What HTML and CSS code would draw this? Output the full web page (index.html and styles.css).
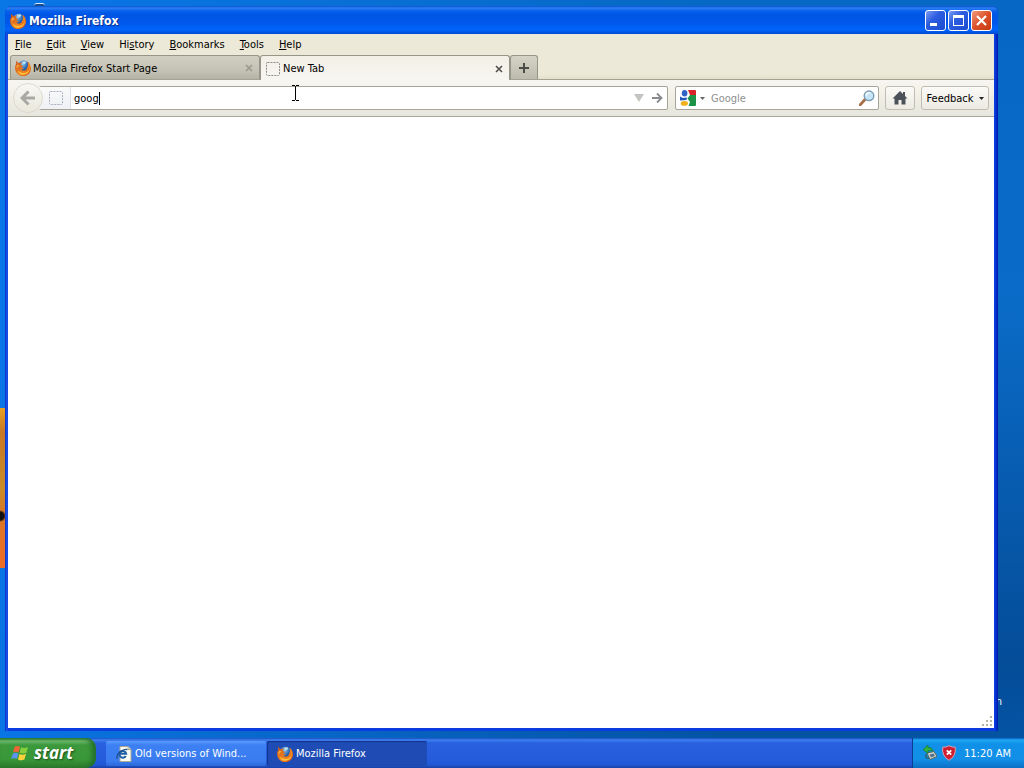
FILE: index.html
```html
<!DOCTYPE html>
<html lang="en">
<head>
    <meta charset="UTF-8">
    <meta name="viewport" content="width=device-width, initial-scale=1.0">
    <title>Mozilla Firefox</title>
    <link rel="stylesheet" href="styles.css">
</head>
<body>
    <!-- Shared icons -->
    <svg class="defs" aria-hidden="true">
        <defs>
            <radialGradient id="globe" cx="0.4" cy="0.3" r="0.8">
                <stop offset="0" stop-color="#8cc8ee"/>
                <stop offset="0.5" stop-color="#2f6fb8"/>
                <stop offset="1" stop-color="#122a68"/>
            </radialGradient>
            <linearGradient id="fox" x1="0" y1="0" x2="1" y2="1">
                <stop offset="0" stop-color="#c8501c"/>
                <stop offset="0.6" stop-color="#f08420"/>
                <stop offset="1" stop-color="#d8480c"/>
            </linearGradient>
            <symbol id="firefox" viewBox="0 0 16 16">
                <circle cx="8.6" cy="6.4" r="5.8" fill="url(#globe)"/>
                <path d="M7 2C8.5 0.8 10.6 1.2 11.4 2.2L10 4L8 4.6Z" fill="#b4dcf4"/>
                <path d="M1 0.6C0.8 2 1 2.8 1.4 3.6C0.4 5.2 -0.2 7.2 0.2 9.4C1 13.4 4.2 16 8.2 16C12.6 16 16 12.8 16 8.4C16 5.6 14.6 2.8 12.4 1.4C13.2 3.4 13.2 5.6 12.4 7.4C11.6 9.6 10.4 10.6 8.6 10.6C7.4 10.6 6.4 10 6 9.2C7.2 9.6 8.4 9.4 9.2 8.6C8.2 8.2 7 8.6 6.6 7.6C6.6 7 7.6 6.6 8.6 5.8C8 5.4 7 5.4 6.2 5.2C5.8 4.4 6.2 3.4 7 2.6C5.8 2.4 4.8 2.8 4 3.2C2.6 2.8 1.6 1.8 1 0.6Z" fill="url(#fox)"/>
                <path d="M15 5C15.4 9.4 13 12.8 8.8 13C5.4 13 3 11.6 2.2 9C2.8 12.8 5.4 14.8 8.4 14.8C12.6 14.8 15.6 11 15 5Z" fill="#fbc43c"/>
                <path d="M2.4 4.6C1.4 6 1.2 7.6 1.6 9C2.4 7.4 3.4 6.2 4.8 5.4Z" fill="#f9a83a"/>
            </symbol>
            <symbol id="blank-page" viewBox="0 0 14 14">
                <rect x="0.5" y="0.5" width="13" height="13" rx="1" fill="none" stroke="currentColor" stroke-dasharray="2 1"/>
            </symbol>
        </defs>
    </svg>

    <div class="desktop">
        <div class="wallpaper-art"></div>
        <div class="wallpaper-mark"></div>
        <span class="desktop-label">n</span>

        <div class="window">
            <header class="titlebar">
                <svg class="icon"><use href="#firefox"/></svg>
                <h1>Mozilla Firefox</h1>
                <div class="window-buttons">
                    <button type="button" aria-label="Minimize">
                        <svg viewBox="0 0 19 19"><rect x="4" y="12" width="7" height="3" fill="#fff"/></svg>
                    </button>
                    <button type="button" aria-label="Maximize">
                        <svg viewBox="0 0 19 19"><path d="M4 4h11v11H4ZM5 7v7h9V7Z" fill="#fff" fill-rule="evenodd"/></svg>
                    </button>
                    <button type="button" class="close" aria-label="Close">
                        <svg viewBox="0 0 19 19"><path d="M5 5L14 14M14 5L5 14" stroke="#fff" stroke-width="2.2"/></svg>
                    </button>
                </div>
            </header>

            <nav class="menubar">
                <button type="button"><u>F</u>ile</button>
                <button type="button"><u>E</u>dit</button>
                <button type="button"><u>V</u>iew</button>
                <button type="button">Hi<u>s</u>tory</button>
                <button type="button"><u>B</u>ookmarks</button>
                <button type="button"><u>T</u>ools</button>
                <button type="button"><u>H</u>elp</button>
            </nav>

            <div class="tabs">
                <div class="tab">
                    <svg class="icon"><use href="#firefox"/></svg>
                    <span>Mozilla Firefox Start Page</span>
                    <button type="button" class="tab-close" aria-label="Close tab">
                        <svg viewBox="0 0 8 8"><path d="M1 1L7 7M7 1L1 7" stroke="currentColor" stroke-width="1.6"/></svg>
                    </button>
                </div>
                <div class="tab active">
                    <svg class="page-icon"><use href="#blank-page"/></svg>
                    <span>New Tab</span>
                    <button type="button" class="tab-close" aria-label="Close tab">
                        <svg viewBox="0 0 8 8"><path d="M1 1L7 7M7 1L1 7" stroke="currentColor" stroke-width="1.6"/></svg>
                    </button>
                </div>
                <button type="button" class="new-tab" aria-label="Open a new tab">
                    <svg viewBox="0 0 10 10"><path d="M5 0V10M0 5H10" stroke="#4c4c48" stroke-width="2"/></svg>
                </button>
            </div>

            <div class="toolbar">
                <button type="button" class="back" aria-label="Back">
                    <svg viewBox="0 0 16 16"><path d="M8.5 1.5L2 8L8.5 14.5M2.5 8H15" fill="none" stroke="#a9a9a3" stroke-width="3"/></svg>
                </button>
                <div class="urlbar">
                    <div class="identity"><svg class="page-icon"><use href="#blank-page"/></svg></div>
                    <input type="text" value="goog" aria-label="Address">
                    <span class="caret"></span>
                    <svg class="history-arrow" viewBox="0 0 10 8"><path d="M0 0H10L5 8Z" fill="#c3c3c0"/></svg>
                    <button type="button" class="go" aria-label="Go">
                        <svg viewBox="0 0 12 12"><path d="M1 6H10M6 1.5L10.5 6L6 10.5" fill="none" stroke="#888c90" stroke-width="1.8"/></svg>
                    </button>
                </div>
                <div class="searchbar">
                    <button type="button" class="engine" aria-label="Choose search engine">
                        <svg class="icon" viewBox="0 0 16 16">
                            <rect width="16" height="16" rx="1" fill="#fff"/>
                            <path d="M8 0H15Q16 0 16 1V5H10Z" fill="#d8232a"/>
                            <path d="M10 5H16V15Q16 16 15 16H8.5L10 12L7.5 8.5Z" fill="#1d9347"/>
                            <path d="M0 6.5L3 8L7 7.5L6.5 10L0 10.5Z" fill="#2456b8"/>
                            <ellipse cx="4.6" cy="3.2" rx="2.8" ry="3.2" fill="#2f62c4"/>
                            <ellipse cx="4.4" cy="13.4" rx="3.6" ry="2.4" fill="#f0b01c"/>
                        </svg>
                        <svg class="drop" viewBox="0 0 5 3"><path d="M0 0H5L2.5 3Z" fill="#666"/></svg>
                    </button>
                    <input type="text" placeholder="Google" aria-label="Search">
                    <button type="button" class="search-go" aria-label="Search">
                        <svg class="icon" viewBox="0 0 16 16">
                            <path d="M1 15L6 9.5" stroke="#a86f48" stroke-width="2.8" stroke-linecap="round"/>
                            <circle cx="10" cy="5.8" r="4.8" fill="#c6e4f7" stroke="#7c9bb5" stroke-width="1.4"/>
                            <path d="M7 5.5Q8 2.5 11 2.8" fill="none" stroke="#fff" stroke-width="1.4"/>
                        </svg>
                    </button>
                </div>
                <button type="button" class="tool home" aria-label="Home">
                    <svg class="icon" viewBox="0 0 16 16"><path d="M8 1L0.5 8.5H2.5V14.5H6.5V10H9.5V14.5H13.5V8.5H15.5L13 6V2H11V4Z" fill="#4c5058"/></svg>
                </button>
                <button type="button" class="tool feedback">Feedback
                    <svg class="drop" viewBox="0 0 5 3"><path d="M0 0H5L2.5 3Z" fill="#222"/></svg>
                </button>
            </div>

            <main class="page">
                <svg class="grip" viewBox="0 0 11 11">
                    <path d="M8 0h2v2H8ZM4 4h2v2H4ZM8 4h2v2H8ZM0 8h2v2H0ZM4 8h2v2H4ZM8 8h2v2H8Z" fill="#b8b4a2"/>
                </svg>
            </main>
        </div>

        <svg class="pointer" viewBox="0 0 7 16"><path d="M0 0.5H3M4 0.5H7M3.5 1V15M0 15.5H3M4 15.5H7" stroke="#000" fill="none"/></svg>
    </div>

    <footer class="taskbar">
        <button type="button" class="start">
            <svg viewBox="0 0 18 16">
                <path d="M3.5 2Q6 0 9 1.8L7.6 7.4Q4.8 6 2 7.6Z" fill="#ee6434"/>
                <path d="M10 2.2Q13 3.8 17 2L15.4 7.8Q12 9.4 8.6 7.8Z" fill="#86ce3c"/>
                <path d="M1.8 8.8Q4.6 7 7.4 8.6L6 14Q3 12.4 0.2 14Z" fill="#5a94f0"/>
                <path d="M8.4 9Q11.6 10.4 15 8.8L13.4 14.6Q10 16 7 14.4Z" fill="#fcd23c"/>
            </svg>
            <span>start</span>
        </button>
        <div class="tasks">
            <button type="button" class="task">
                <svg class="icon" viewBox="0 0 16 16">
                    <path d="M4 0.5H12L15 3.5V15.5H4Z" fill="#fbfbf4" stroke="#a9a994"/>
                    <path d="M12 0.5V3.5H15" fill="#d8d8c8" stroke="#a9a994"/>
                    <path d="M9.8 10A3.4 3.4 0 1 1 10.2 7.8H4" fill="none" stroke="#1e5fa8" stroke-width="2"/>
                    <path d="M1.4 12.6Q-0.5 10 4 5.8Q8.6 2.4 11.4 3.6" fill="none" stroke="#1c4c88" stroke-width="1.2"/>
                </svg>
                <span>Old versions of Wind...</span>
            </button>
            <button type="button" class="task pressed">
                <svg class="icon"><use href="#firefox"/></svg>
                <span>Mozilla Firefox</span>
            </button>
        </div>
        <div class="tray">
            <svg viewBox="0 0 14 16">
                <path d="M4 8L11 6.5L14 11.5L7 14.5Z" fill="#d4d8d0" stroke="#5c6860"/>
                <path d="M6.5 9.5L10.5 8.5L12 11L8 12.4Z" fill="#54708c"/>
                <path d="M0 4.5L5 0V2.5Q9 2 10 6Q7.5 5 5 6V8.5Z" fill="#30b040" stroke="#14702c" stroke-width="0.6"/>
                <path d="M3 9V13H6" fill="none" stroke="#34503c"/>
            </svg>
            <svg viewBox="0 0 14 16">
                <path d="M7 0.7Q10 2.4 13.3 2.2Q14.4 11 7 15.3Q-0.4 11 0.7 2.2Q4 2.4 7 0.7Z" fill="#cf1e30" stroke="#d8a4b4"/>
                <path d="M4.8 5.3L9.2 9.7M9.2 5.3L4.8 9.7" stroke="#fff" stroke-width="1.8"/>
            </svg>
            <time>11:20 AM</time>
        </div>
    </footer>
</body>
</html>
```
FILE: styles.css
```css
* {
    box-sizing: border-box;
    margin: 0;
    padding: 0;
}

body {
    display: flex;
    flex-direction: column;
    height: 100vh;
    overflow: hidden;
    font-family: "DejaVu Sans Condensed", Tahoma, "Noto Sans", sans-serif;
    font-size: 11px;
    color: #000;
}

button, input {
    font: inherit;
    color: inherit;
    background: none;
    border: none;
    outline: none;
}

svg {
    display: block;
    flex: none;
}

.defs {
    position: absolute;
    width: 0;
    height: 0;
}

.icon {
    width: 16px;
    height: 16px;
}

.page-icon {
    width: 14px;
    height: 14px;
    color: #8c8c88;
}

.drop {
    width: 5px;
    height: 3px;
}

/* Desktop */
.desktop {
    position: relative;
    display: flex;
    flex: 1;
    min-height: 0;
    padding: 6px 26px 7px 5px;
    background: linear-gradient(to right, rgba(10, 120, 235, 0.9), rgba(10, 120, 235, 0) 70%), linear-gradient(#0668c4, #0a6cc8 40%, #044c98 90%, #0454a4);
}

.wallpaper-art {
    position: absolute;
    left: 0;
    top: 408px;
    width: 5px;
    height: 160px;
    background: radial-gradient(circle at 0 108px, #101010 4px, transparent 6px), linear-gradient(#e8a020, #c87828 15%, #c88c28 50%, #d87828 65%, #f06c28);
}

.wallpaper-mark {
    position: absolute;
    left: 34px;
    top: 3px;
    width: 11px;
    height: 3px;
    border-top: 1px solid #d8ecf8;
    border-radius: 6px 6px 0 0;
    background: #124c90;
}

.desktop-label {
    position: absolute;
    right: 22px;
    top: 695px;
    color: #fff;
}

/* Window */
.window {
    position: relative;
    display: flex;
    flex: 1;
    flex-direction: column;
    padding: 0 4px 3px 3px;
    background: linear-gradient(to right, #0a2cc8, #1c58ec 2px, #0a3ce0 3px, #0a3ce0 calc(100% - 3px), #0018a8);
    border-radius: 7px 7px 0 0;
    overflow: hidden;
}

.titlebar {
    display: flex;
    align-items: center;
    flex: none;
    height: 28px;
    margin: 0 -4px 0 -3px;
    padding: 1px 6px 0 5px;
    gap: 3px;
    background: linear-gradient(#0a50d0, #2c80f4 2px, #0860ec 5px, #0055e4 9px, #0058ea 60%, #0064fc 85%, #0048d0);
}

.titlebar h1 {
    flex: 1;
    font-size: 12px;
    font-weight: bold;
    color: #fff;
    text-shadow: 1px 1px 1px #0c2c8c;
}

.window-buttons {
    display: flex;
    gap: 2px;
}

.window-buttons button {
    width: 21px;
    height: 21px;
    border: 1px solid #fff;
    border-radius: 3px;
    background: linear-gradient(135deg, #7c9cf4, #2c5ce0 40%, #1c4cd0);
}

.window-buttons .close {
    background: linear-gradient(135deg, #f09c80, #dc5028 50%, #c43c14);
}

/* Menu */
.menubar {
    display: flex;
    flex: none;
    height: 20px;
    gap: 15px;
    padding: 0 7px;
    background: #ece9d8;
}

/* Tabs */
.tabs {
    display: flex;
    flex: none;
    height: 26px;
    padding: 1px 2px 0;
    background: linear-gradient(#ece9d8 80%, #e4e0cc);
    border-bottom: 1px solid #a4a294;
}

.tab {
    display: flex;
    align-items: center;
    width: 250px;
    gap: 2px;
    padding: 1px 6px 0 4px;
    border: 1px solid #96958a;
    border-bottom: none;
    border-radius: 3px 3px 0 0;
    background: linear-gradient(#d0cfc1, #c4c3b5 60%, #b4b3a6);
}

.tab.active {
    margin-bottom: -1px;
    padding-left: 5px;
    gap: 3px;
    background: linear-gradient(#f2efe6, #f8f6f1);
}

.tab span {
    flex: 1;
}

.tab-close {
    width: 8px;
    height: 8px;
    color: #9a998e;
}

.active .tab-close {
    color: #50504c;
}

.new-tab {
    width: 28px;
    border: 1px solid #96958a;
    border-bottom: none;
    border-radius: 3px 3px 0 0;
    background: linear-gradient(#d4d3c6, #bcbbae);
}

.new-tab svg {
    width: 10px;
    height: 10px;
    margin: 0 auto;
}

/* Navigation */
.toolbar {
    display: flex;
    align-items: center;
    flex: none;
    height: 37px;
    padding: 0 5px;
    background: linear-gradient(#f8f6f1, #f0eee4 50%, #e6e6de);
    border-bottom: 1px solid #a8a898;
}

.back {
    position: relative;
    display: flex;
    align-items: center;
    justify-content: center;
    width: 30px;
    height: 30px;
    margin-right: -4px;
    border: 1px solid #dcdace;
    border-radius: 50%;
    background: linear-gradient(#f8f7f2, #eae8dc);
    z-index: 1;
}

.back svg {
    width: 16px;
    height: 16px;
}

.urlbar, .searchbar {
    display: flex;
    align-items: center;
    height: 24px;
    border: 1px solid #a6a598;
    border-radius: 2px;
    background: #fff;
}

.urlbar {
    position: relative;
    flex: 1;
    margin-right: 7px;
    border-left: none;
}

.identity {
    display: flex;
    align-items: center;
    align-self: stretch;
    width: 32px;
    padding-left: 10px;
    border-right: 1px solid #dce0e8;
    background: linear-gradient(#fafafa, #eef0f4);
}

.identity .page-icon {
    color: #a8b0c0;
}

.urlbar input {
    flex: 1;
    min-width: 0;
    padding-left: 3px;
}

.caret {
    position: absolute;
    left: 60px;
    top: 5px;
    width: 1px;
    height: 13px;
    background: #000;
}

.history-arrow {
    width: 10px;
    height: 8px;
    margin-right: 7px;
}

.go {
    width: 12px;
    height: 12px;
    margin-right: 4px;
}

.searchbar {
    width: 204px;
    margin-right: 6px;
    padding: 0 3px 0 4px;
}

.engine {
    display: flex;
    align-items: center;
    gap: 4px;
    margin-right: 6px;
}

.searchbar input {
    flex: 1;
    min-width: 0;
}

.searchbar input::placeholder {
    color: #909090;
    opacity: 1;
}

.tool {
    display: flex;
    align-items: center;
    justify-content: center;
    height: 24px;
    border: 1px solid #c0beb2;
    border-radius: 3px;
    background: linear-gradient(#fbfaf7, #eceae2);
}

.home {
    width: 30px;
    margin-right: 6px;
}

.feedback {
    width: 68px;
    gap: 5px;
}

.page {
    display: flex;
    flex: 1;
    align-items: flex-end;
    justify-content: flex-end;
    padding: 1px;
    background: #fff;
}

.grip {
    width: 11px;
    height: 11px;
}

.pointer {
    position: absolute;
    left: 292px;
    top: 85px;
    width: 7px;
    height: 16px;
}

/* Taskbar */
.taskbar {
    display: flex;
    flex: none;
    height: 30px;
    background: linear-gradient(#1c50c0, #3c80f0 2px, #2860e0 5px, #245cdc 70%, #2258d4 90%, #1840a4);
}

.start {
    display: flex;
    align-items: center;
    width: 96px;
    gap: 5px;
    padding-left: 11px;
    border-radius: 0 10px 10px 0;
    background: linear-gradient(#2c7c2c, #70bc70 3px, #3c983c 7px, #389838 70%, #2c7c2c);
    box-shadow: inset -4px 0 5px #24702c;
}

.start svg {
    width: 18px;
    height: 16px;
}

.start span {
    font-family: "Open Sans", "Noto Sans", sans-serif;
    font-size: 17px;
    font-weight: bold;
    font-style: italic;
    line-height: 20px;
    color: #fff;
    text-shadow: 1px 1px 2px #184c18;
}

.tasks {
    display: flex;
    flex: 1;
    gap: 1px;
    padding: 3px 0 2px 10px;
}

.task {
    display: flex;
    align-items: center;
    width: 160px;
    gap: 3px;
    padding-left: 10px;
    border-radius: 2px;
    background: linear-gradient(#5c9cfc, #3c80f4 4px, #3a7cf0 80%, #2c68d8);
    color: #fff;
}

.task.pressed {
    background: #1e4cb4;
    box-shadow: inset 1px 1px 1px #12348c;
}

.tray {
    display: flex;
    align-items: center;
    gap: 5px;
    padding: 0 13px 0 10px;
    border-left: 1px solid #0c3c94;
    background: linear-gradient(#0c60c0, #1ca8f4 2px, #1090e8 6px, #1290e8 70%, #0c70c4);
    color: #fff;
}

.tray svg {
    width: 14px;
    height: 16px;
}

.tray time {
    margin-left: 3px;
}
```
